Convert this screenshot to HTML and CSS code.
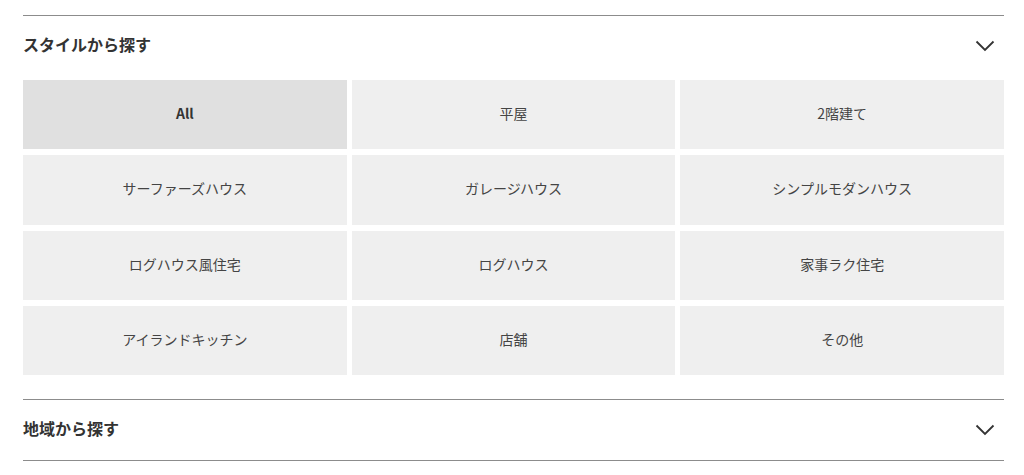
FILE: index.html
```html
<!DOCTYPE html>
<html lang="ja">
<head>
    <meta charset="UTF-8">
    <meta name="viewport" content="width=device-width, initial-scale=1.0">
    <title>スタイルから探す</title>
    <link rel="stylesheet" href="styles.css">
</head>
<body>

    <div class="search-wrap">
        <section class="search-block">
            <div class="search-head">
                <h3>スタイルから探す</h3>
                <svg class="chevron" width="20" height="12" viewBox="0 0 20 12">
                    <polyline points="1.5,1.5 10,10 18.5,1.5" fill="none" stroke="#333" stroke-width="1.8"/>
                </svg>
            </div>
            <div class="style-grid">
                <a class="style-item active" href="#">All</a>
                <a class="style-item" href="#">平屋</a>
                <a class="style-item" href="#">2階建て</a>
                <a class="style-item" href="#">サーファーズハウス</a>
                <a class="style-item" href="#">ガレージハウス</a>
                <a class="style-item" href="#">シンプルモダンハウス</a>
                <a class="style-item" href="#">ログハウス風住宅</a>
                <a class="style-item" href="#">ログハウス</a>
                <a class="style-item" href="#">家事ラク住宅</a>
                <a class="style-item" href="#">アイランドキッチン</a>
                <a class="style-item" href="#">店舗</a>
                <a class="style-item" href="#">その他</a>
            </div>
        </section>

        <section class="search-block closed">
            <div class="search-head">
                <h3>地域から探す</h3>
                <svg class="chevron" width="20" height="12" viewBox="0 0 20 12">
                    <polyline points="1.5,1.5 10,10 18.5,1.5" fill="none" stroke="#333" stroke-width="1.8"/>
                </svg>
            </div>
        </section>
    </div>

</body>
</html>
```

FILE: styles.css
```css
body {
    margin: 0;
    font-family: "Noto Sans CJK JP", "Noto Sans", sans-serif;
    color: #333;
    background: #fff;
}
.search-wrap {
    margin: 15px 20px 0 23px;
}
.search-block {
    border-top: 1px solid #8c8c8c;
    padding-bottom: 24px;
}
.search-block.closed {
    padding-bottom: 0;
    border-bottom: 1px solid #8c8c8c;
}
.search-head {
    height: 56px;
    padding-bottom: 4px;
    display: flex;
    align-items: center;
    justify-content: space-between;
}
.search-head h3 {
    margin: 0;
    font-size: 16px;
    font-weight: bold;
    color: #333;
}
.chevron {
    margin-right: 9px;
    margin-top: 4px;
}
.style-grid {
    margin-top: 4px;
    display: grid;
    grid-template-columns: repeat(3, 1fr);
    grid-auto-rows: 69.3px;
    column-gap: 5px;
    row-gap: 6px;
}
.style-item {
    display: flex;
    align-items: center;
    justify-content: center;
    padding-bottom: 3px;
    background: #efefef;
    color: #444;
    font-size: 14px;
    text-decoration: none;
}
.style-item.active {
    background: #e0e0e0;
    font-weight: bold;
    color: #333;
}
```
